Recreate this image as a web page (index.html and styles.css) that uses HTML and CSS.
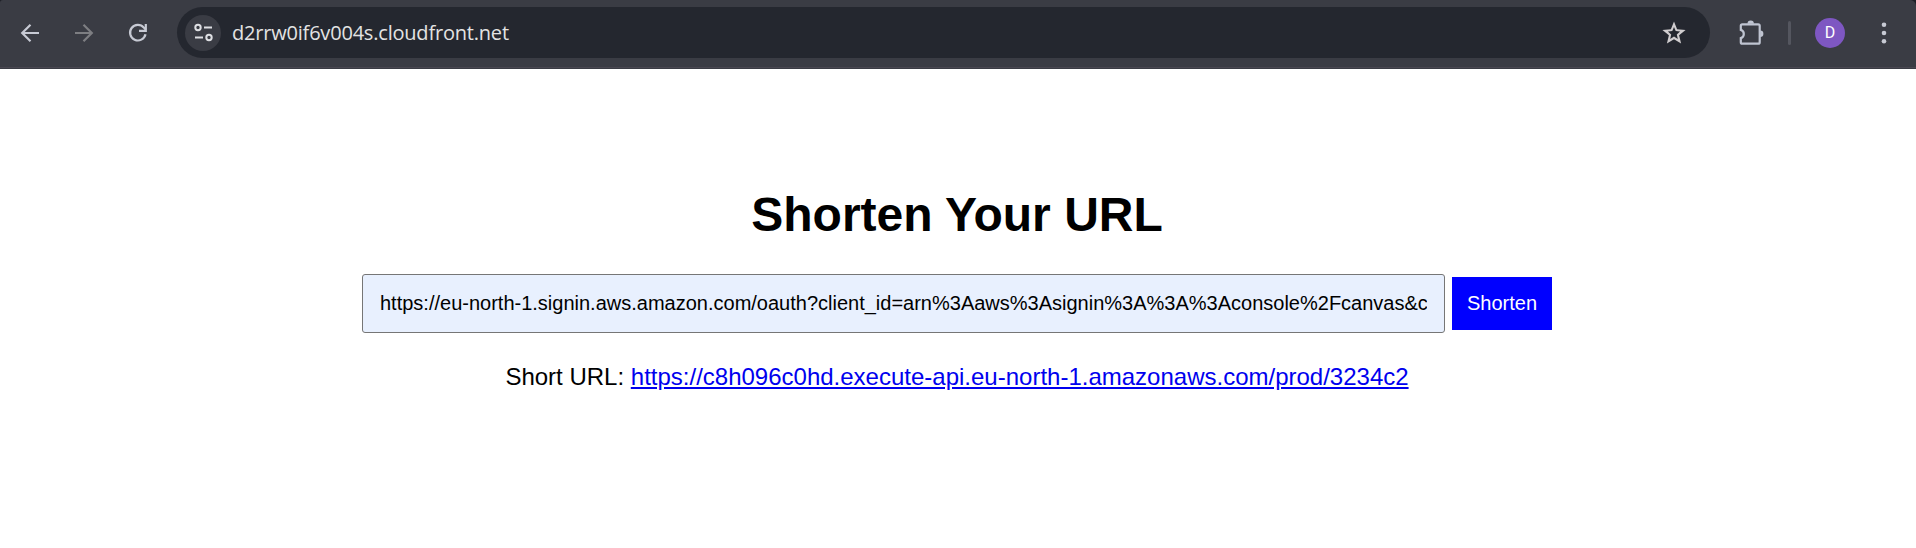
FILE: index.html
```html
<!DOCTYPE html>
<html lang="en">
<head>
<meta charset="utf-8">
<title>Shorten Your URL</title>
<link rel="stylesheet" href="styles.css">
</head>
<body>
<div class="window-top">
<header class="toolbar">
  <svg class="icon back" viewBox="0 0 30 30"><path d="M24 15H7.500M15.500 6.700L7.200 15l8.300 8.300"/></svg>
  <svg class="icon forward" viewBox="0 0 30 30"><path d="M6 15h16.500M14.500 6.700l8.300 8.300-8.300 8.300"/></svg>
  <svg class="icon reload" viewBox="0 0 30 30"><path d="M22.500 16.300A7.800 7.800 0 1 1 20.800 9.600L23 11.800"/><path d="M22.800 6v6.800H16"/></svg>
  <div class="address">
    <span class="site-info">
      <svg class="tune" viewBox="0 0 20 20"><circle cx="5" cy="4.500" r="2.700"/><path d="M11 4.500h8M2 14.500h8"/><circle cx="16" cy="14.500" r="2.700"/></svg>
    </span>
    <span class="host">d2rrw0if6v004s.cloudfront.net</span>
    <svg class="star" viewBox="0 0 30 30"><path fill-rule="evenodd" d="M15 3.500L18.100 11.200L26.600 11.900L20.100 17.300L22.100 25.600L15 21.200L7.900 25.600L9.900 17.300L3.400 11.900L11.900 11.200ZM15 9L13.300 13.100L8.900 13.500L12.200 16.400L11.200 20.900L15 18.600L18.800 20.900L17.800 16.400L21.100 13.500L16.700 13.100Z"/></svg>
  </div>
  <svg class="puzzle" viewBox="0 0 30 30"><path class="frame" d="M6.300 7.300H22.200Q23.700 7.300 23.700 8.800V25.200Q23.700 26.700 22.200 26.700H6.300Q4.800 26.700 4.800 25.200V21.100A4.300 4.300 0 0 0 4.800 12.900V8.800Q4.800 7.300 6.300 7.300Z"/><path class="tabs" d="M11.500 6.800a3.200 3.200 0 0 1 6.400 0zM24.200 13.500a3.200 3.200 0 0 1 0 6.400z"/></svg>
  <span class="divider"></span>
  <span class="avatar">D</span>
  <svg class="menu" viewBox="0 0 8 24"><circle cx="4" cy="3.700" r="2.300"/><circle cx="4" cy="12" r="2.300"/><circle cx="4" cy="20.300" r="2.300"/></svg>
</header>
</div>
<main class="page">
  <h1 class="title">Shorten Your URL</h1>
  <form class="form">
    <input class="url-input" type="text" value="https://eu-north-1.signin.aws.amazon.com/oauth?client_id=arn%3Aaws%3Asignin%3A%3A%3Aconsole%2Fcanvas&amp;code_challenge">
    <button class="submit" type="button">Shorten</button>
  </form>
  <p class="result">Short URL: <a class="link" href="#">https://c8h096c0hd.execute-api.eu-north-1.amazonaws.com/prod/3234c2</a></p>
</main>
</body>
</html>
```

FILE: styles.css
```css
* { box-sizing: border-box; }
body {
  margin: 0;
  background: #fff;
  color: #000;
  font-family: "Liberation Sans", Arial, sans-serif;
}
.window-top { background: #1d1f26; }
.toolbar {
  display: flex;
  align-items: center;
  height: 69px;
  padding: 0 28px 1px 15px;
  border-radius: 3px 6px 0 0;
  background: linear-gradient(#3a3c44 67px, #494751 67px, #494751 68px, #3a3c44 68px);
}
.icon {
  width: 30px;
  height: 30px;
  margin: -2px 24px 0 0;
  fill: none;
  stroke: #c7cad4;
  stroke-width: 2.200;
}
.forward { stroke: #7d7e82; }
.address {
  display: flex;
  align-items: center;
  width: 1533px;
  height: 51px;
  margin-top: -3px;
  padding: 0 21px 0 8px;
  border-radius: 26px;
  background: #24272f;
}
.site-info {
  display: flex;
  align-items: center;
  justify-content: center;
  width: 36px;
  height: 36px;
  border-radius: 50%;
  background: #3a3c44;
}
.tune {
  width: 20px;
  height: 20px;
  fill: none;
  stroke: #dedfe3;
  stroke-width: 2;
}
.host {
  margin-left: 11px;
  color: #e3e3e3;
  font: 20px/30px "Open Sans", "Noto Sans", sans-serif;
  letter-spacing: -0.200px;
}
.star {
  width: 30px;
  height: 30px;
  margin-left: auto;
  fill: #d0cdcf;
}
.puzzle {
  width: 30px;
  height: 30px;
  margin: -5px 0 0 26px;
}
.frame { fill: none; stroke: #bfc4d1; stroke-width: 2.200; }
.tabs { fill: #bfc4d1; }
.divider {
  width: 3px;
  height: 24px;
  margin: -2px 0 0 22px;
  border-radius: 2px;
  background: #54565f;
}
.avatar {
  width: 30px;
  height: 30px;
  margin: -2px 0 0 24px;
  border-radius: 50%;
  background: #7e57c2;
  color: #fff;
  font: 16px/30px Roboto, sans-serif;
  text-align: center;
}
.menu {
  width: 8px;
  height: 24px;
  margin: -2px 0 0 auto;
  fill: #c7cad4;
}
.page {
  padding: 118px 2px 0 0;
  text-align: center;
}
.title {
  margin: 0 0 32px;
  font-size: 48px;
  line-height: 55px;
}
.form {
  display: flex;
  align-items: center;
  justify-content: center;
  gap: 7px;
}
.url-input {
  width: 1083px;
  height: 59px;
  padding: 0 17px;
  border: 1px solid #767676;
  border-radius: 3px;
  background: #e8f0fe;
  color: #000;
  font: 20px "Liberation Sans", Arial, sans-serif;
}
.submit {
  width: 100px;
  height: 53px;
  padding: 0;
  border: 0;
  background: #00f;
  color: #fff;
  font: 20px "Liberation Sans", Arial, sans-serif;
}
.result {
  margin: 30px 0 0;
  font-size: 24px;
  line-height: 27px;
}
.link { color: #00e; }
```
